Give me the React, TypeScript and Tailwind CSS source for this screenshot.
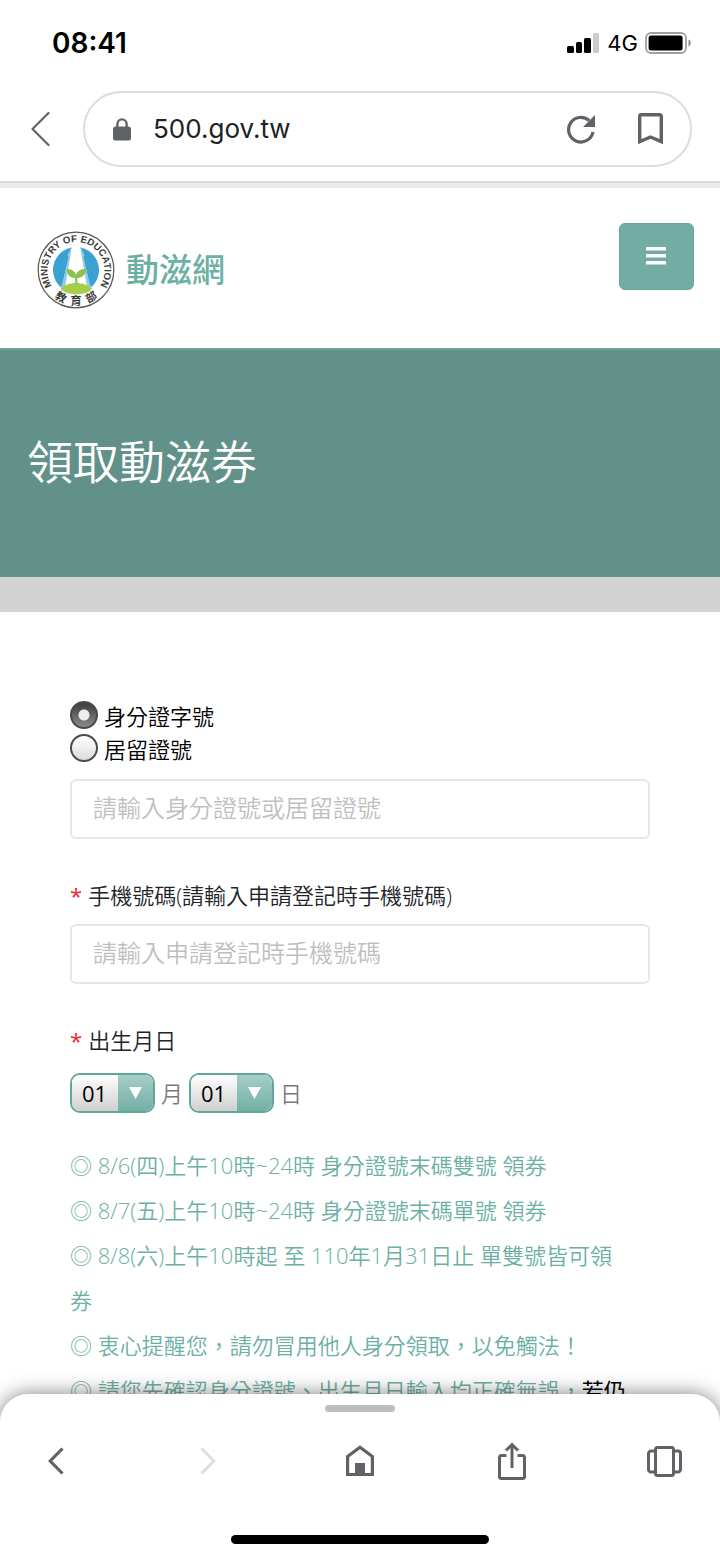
import { useState } from 'react';

const notices = [
  '◎ 8/6(四)上午10時~24時 身分證號末碼雙號 領券',
  '◎ 8/7(五)上午10時~24時 身分證號末碼單號 領券',
  '◎ 8/8(六)上午10時起 至 110年1月31日止 單雙號皆可領券',
  '◎ 衷心提醒您，請勿冒用他人身分領取，以免觸法！',
];

const months = Array.from({ length: 12 }, (_, i) => String(i + 1).padStart(2, '0'));
const days = Array.from({ length: 31 }, (_, i) => String(i + 1).padStart(2, '0'));

function StatusBar() {
  return (
    <div className="flex h-[86px] items-center justify-between pl-[52px] pr-[29px] text-black">
      <span className="font-['Inter','Liberation_Sans',sans-serif] text-[28px] font-semibold">08:41</span>
      <div className="flex items-center gap-[7px]">
        <svg width="33" height="21" viewBox="0 0 33 21" aria-hidden="true">
          <rect x="0" y="13" width="7" height="7" rx="1.5" />
          <rect x="9" y="9" width="6" height="11" rx="1.5" />
          <rect x="17" y="5" width="7" height="15" rx="1.5" />
          <rect x="26" y="0" width="6" height="20" rx="1.5" fill="#cccccc" />
        </svg>
        <span className="font-['Inter','Liberation_Sans',sans-serif] text-[22px] leading-6">4G</span>
        <svg width="46" height="22" viewBox="0 0 46 22" aria-hidden="true">
          <rect x="1" y="1" width="40" height="20" rx="5" fill="none" stroke="#a0a0a0" strokeWidth="1.8" />
          <rect x="3.6" y="3.6" width="34" height="15" rx="2.5" />
          <path d="M43.5 7.5c3 1.2 3 5.8 0 7z" fill="#8c8c8c" />
        </svg>
      </div>
    </div>
  );
}

function AddressBar() {
  return (
    <div className="flex items-center border-b-2 border-[#d9d9dd] pt-[5px] pb-[14px] pl-[30px] pr-7">
      <button type="button" aria-label="關閉" className="mr-[33px]">
        <svg width="20" height="36" viewBox="0 0 20 36" fill="none" stroke="#5f6368" strokeWidth="2.2" strokeLinecap="round" strokeLinejoin="round">
          <path d="M18.5 2L2.5 18l16 16" />
        </svg>
      </button>
      <div className="flex h-[76px] min-w-0 flex-1 items-center rounded-full border-2 border-[#dbdbe0] pl-7 pr-[27px]">
        <svg width="18" height="23" viewBox="0 0 18 23" fill="none" className="shrink-0" aria-hidden="true">
          <rect x="0" y="8.5" width="18" height="14" rx="2.5" fill="#5f6368" />
          <path d="M4.4 10V6a4.6 4.6 0 0 1 9.2 0v4" stroke="#5f6368" strokeWidth="2.4" />
        </svg>
        <input
          type="text"
          aria-label="網址"
          defaultValue="500.gov.tw"
          className="ml-[22px] min-w-0 flex-1 pb-0.5 font-['Inter','Liberation_Sans',sans-serif] text-[26px] text-[#202124] outline-none"
        />
        <button type="button" aria-label="重新整理" className="mr-[42px]">
          <svg width="30" height="30" viewBox="0 0 30 30" fill="none">
            <path d="M23.2 6.6A12.3 12.3 0 1 0 27 18" stroke="#5f6368" strokeWidth="3.2" />
            <path d="M29 1v12H17z" fill="#5f6368" />
          </svg>
        </button>
        <button type="button" aria-label="書籤">
          <svg width="25" height="32" viewBox="0 0 25 32" fill="none" stroke="#5f6368" strokeWidth="3.4">
            <path d="M1.7 28.6V3.2a1.5 1.5 0 0 1 1.5-1.5h18.6a1.5 1.5 0 0 1 1.5 1.5v25.4L12.5 24z" />
          </svg>
        </button>
      </div>
    </div>
  );
}

function Seal() {
  return (
    <svg width="78" height="78" viewBox="0 0 78 78" className="shrink-0" role="img" aria-label="Ministry of Education">
      <defs>
        <path id="sealTop" d="M19.300 60A28.500 28.500 0 1 1 58.700 60" />
      </defs>
      <circle cx="39" cy="39" r="37.8" fill="#ffffff" stroke="#555555" strokeWidth="1.2" />
      <circle cx="39" cy="39" r="23" fill="#3ba1d0" />
      <path d="M34.500 15h9L55 64H23z" fill="#ffffff" />
      <path d="M34.500 16l-4 8 1 2-5 22L24 56l4 1 8-41zM43.500 16l4 8-1 2 5 22 2.500 8-4 1-8-41z" fill="#8fcbe8" />
      <path d="M35 15h8l8 48H27z" fill="#ffffff" />
      <path d="M23.500 58c6-8 25-8 31.500 0-6 7-25 7-31.500 0z" fill="#a5ce4b" />
      <path d="M38 53c.5-3 .3-4.500 0-6-5 0-8-3-8.500-9 5-.5 8.500 2.500 9.600 6 1.200-3.800 4.600-6.500 10-6-.4 5.500-3.500 9-8.600 9-.3 2-.3 4 .3 6z" fill="#8bc34a" />
      <text fontFamily="'Liberation Sans', sans-serif" fontSize="9.700" fontWeight="700" fill="#3c3c3c">
        <textPath href="#sealTop" startOffset="50%" textAnchor="middle">MINISTRY OF EDUCATION</textPath>
      </text>
      <g fontFamily="'Noto Sans CJK TC', sans-serif" fontSize="11" fontWeight="700" fill="#3c3c3c" textAnchor="middle">
        <text transform="rotate(29 39 39)" x="39" y="74">教</text>
        <text x="39" y="74">育</text>
        <text transform="rotate(-29 39 39)" x="39" y="74">部</text>
      </g>
    </svg>
  );
}

function SiteHeader() {
  return (
    <header className="flex h-40 items-start justify-between pl-[37px] pr-[26px] pt-[35px]">
      <a href="#" className="flex items-center gap-[11px] pt-2">
        <Seal />
        <span className="text-[33px] font-medium leading-[48px] text-[#6cb0a4]">動滋網</span>
      </a>
      <button
        type="button"
        aria-label="選單"
        className="flex h-[67px] w-[75px] items-center justify-center rounded-md border border-[#68a79b] bg-[#71ada3] pb-0.5 pr-0.5"
      >
        <svg width="20" height="18" viewBox="0 0 20 18" fill="#ffffff">
          <rect y="0" width="20" height="3.500" rx="0.500" />
          <rect y="7" width="20" height="3.500" rx="0.500" />
          <rect y="14" width="20" height="3.500" rx="0.500" />
        </svg>
      </button>
    </header>
  );
}

function RadioOption({ label, checked, onChange }: { label: string; checked: boolean; onChange: () => void }) {
  return (
    <label className="flex h-[33px] items-center gap-1.5 text-[22px] text-black">
      <input
        type="radio"
        name="idType"
        checked={checked}
        onChange={onChange}
        className="size-7 shrink-0 appearance-none rounded-full border-2 border-[#4a4a4a] bg-linear-to-b from-white to-[#dcdcdc] checked:bg-[radial-gradient(circle,#eeeeee_5px,transparent_6px),linear-gradient(#3c3c3c,#8a8a8a)]"
      />
      <span className="pt-1">{label}</span>
    </label>
  );
}

function FieldLabel({ htmlFor, text }: { htmlFor: string; text: string }) {
  return (
    <label htmlFor={htmlFor} className="block text-[22px] leading-8 text-[#212529]">
      <span className="mr-1.5 font-normal text-[#f5222d]">*</span>
      {text}
    </label>
  );
}

function SelectBox({ id, label, options }: { id: string; label: string; options: string[] }) {
  return (
    <div className="relative h-10 w-[85px] overflow-hidden rounded-[10px] border-2 border-[#5fa79b]">
      <select
        id={id}
        aria-label={label}
        className="h-full w-full appearance-none bg-linear-to-b from-white to-[#cfcfcf] pl-2.5 text-[22px] font-normal leading-9 text-black outline-none"
      >
        {options.map((o) => (
          <option key={o}>{o}</option>
        ))}
      </select>
      <span className="pointer-events-none absolute inset-y-0 right-0 flex w-[35px] items-center justify-center bg-linear-to-b from-[#a5cec6] to-[#73b0a5]">
        <svg width="13" height="12" viewBox="0 0 13 12" aria-hidden="true">
          <path d="M0 0h13L6.500 12z" fill="#ffffff" />
        </svg>
      </span>
    </div>
  );
}

function BottomNav() {
  return (
    <nav className="relative z-10 -mt-7 shrink-0 rounded-t-[28px] bg-white pt-[11px] pb-3.5 shadow-[0_0_20px_rgba(0,0,0,0.5)]">
      <div className="mx-auto h-[7px] w-[70px] rounded-full bg-[#bdbdbd]" />
      <div className="mt-[22px] flex h-[54px] items-center justify-between px-9">
        <button type="button" aria-label="上一頁" className="flex w-10 justify-center">
          <svg width="16" height="28" viewBox="0 0 16 28" fill="none" stroke="#5f6368" strokeWidth="3.200">
            <path d="M14.500 1.500L2.200 14l12.300 12.500" />
          </svg>
        </button>
        <button type="button" aria-label="下一頁" disabled className="flex w-10 justify-center">
          <svg width="16" height="28" viewBox="0 0 16 28" fill="none" stroke="#dfdfdf" strokeWidth="3.200">
            <path d="M1.500 1.500L13.800 14 1.500 26.500" />
          </svg>
        </button>
        <button type="button" aria-label="首頁" className="flex w-10 justify-center">
          <svg width="28" height="32" viewBox="0 0 28 32" fill="none">
            <path d="M1.600 11.500L14 2.200l12.400 9.300v18H1.600z" stroke="#5f6368" strokeWidth="3.200" />
            <rect x="9" y="18" width="10" height="12" fill="#5f6368" />
          </svg>
        </button>
        <button type="button" aria-label="分享" className="flex w-10 justify-center">
          <svg width="28" height="38" viewBox="0 0 28 38" fill="none" stroke="#5f6368" strokeWidth="3">
            <path d="M8.500 13.500H3.500a2 2 0 0 0-2 2v19a2 2 0 0 0 2 2h21a2 2 0 0 0 2-2v-19a2 2 0 0 0-2-2h-5" />
            <path d="M14 26V4" />
            <path d="M8 8.500l6-6 6 6" />
          </svg>
        </button>
        <button type="button" aria-label="分頁" className="flex w-10 justify-center">
          <svg width="35" height="31" viewBox="0 0 35 31" fill="none" stroke="#5f6368" strokeWidth="3">
            <rect x="8.500" y="1.500" width="18" height="28" rx="2" />
            <path d="M8.500 5H4a2.500 2.500 0 0 0-2.500 2.500v16A2.500 2.500 0 0 0 4 26h4.500M26.500 5H31a2.500 2.500 0 0 1 2.500 2.500v16A2.500 2.500 0 0 1 31 26h-4.500" />
          </svg>
        </button>
      </div>
      <div className="mx-auto mt-[47px] h-[9px] w-[258px] rounded-full bg-black" />
    </nav>
  );
}

export default function App() {
  const [idType, setIdType] = useState('id');

  return (
    <div className="flex h-screen flex-col overflow-hidden bg-white font-['Open_Sans','Noto_Sans_CJK_TC',sans-serif]" lang="zh-Hant">
      <div className="shrink-0">
        <StatusBar />
        <AddressBar />
      </div>

      <main className="min-h-0 flex-1 overflow-hidden border-t-[5px] border-[#ebebeb]">
        <SiteHeader />

        <div className="flex h-[229px] items-center border-t-2 border-[#75a199] bg-[#619189] px-[27px] pb-1">
          <h1 className="text-[46px] font-[350] text-white">領取動滋券</h1>
        </div>
        <div className="h-[35px] bg-[#d3d3d3]" />

        <form className="px-[70px] pt-[86px] font-[350]" onSubmit={(e) => e.preventDefault()}>
          <RadioOption label="身分證字號" checked={idType === 'id'} onChange={() => setIdType('id')} />
          <RadioOption label="居留證號" checked={idType === 'arc'} onChange={() => setIdType('arc')} />
          <input
            type="text"
            aria-label="身分證號或居留證號"
            placeholder="請輸入身分證號或居留證號"
            className="mt-[15px] mb-10 h-[60px] w-full rounded-md border-2 border-[#e6e6e6] px-[21px] pb-1 text-2xl outline-none placeholder:text-[#bfbfbf]"
          />

          <FieldLabel htmlFor="phone" text="手機號碼(請輸入申請登記時手機號碼)" />
          <input
            id="phone"
            type="tel"
            placeholder="請輸入申請登記時手機號碼"
            className="mt-[13px] mb-10 h-[60px] w-full rounded-md border-2 border-[#e6e6e6] px-[21px] pb-1 text-2xl outline-none placeholder:text-[#bfbfbf]"
          />

          <FieldLabel htmlFor="month" text="出生月日" />
          <div className="mt-[17px] flex items-center gap-1.5 text-[22px] text-[#7a7a7a]">
            <SelectBox id="month" label="月" options={months} />
            <span>月</span>
            <SelectBox id="day" label="日" options={days} />
            <span>日</span>
          </div>

          <div className="mt-[30px] pr-5 text-[22px] leading-[45px] text-[#6cb0a4]">
            {notices.map((n) => (
              <p key={n}>{n}</p>
            ))}
            <p>
              ◎ 請您先確認身分證號、出生月日輸入均正確無誤，
              <span className="font-normal text-black">若仍</span>
            </p>
          </div>
        </form>
      </main>

      <BottomNav />
    </div>
  );
}
